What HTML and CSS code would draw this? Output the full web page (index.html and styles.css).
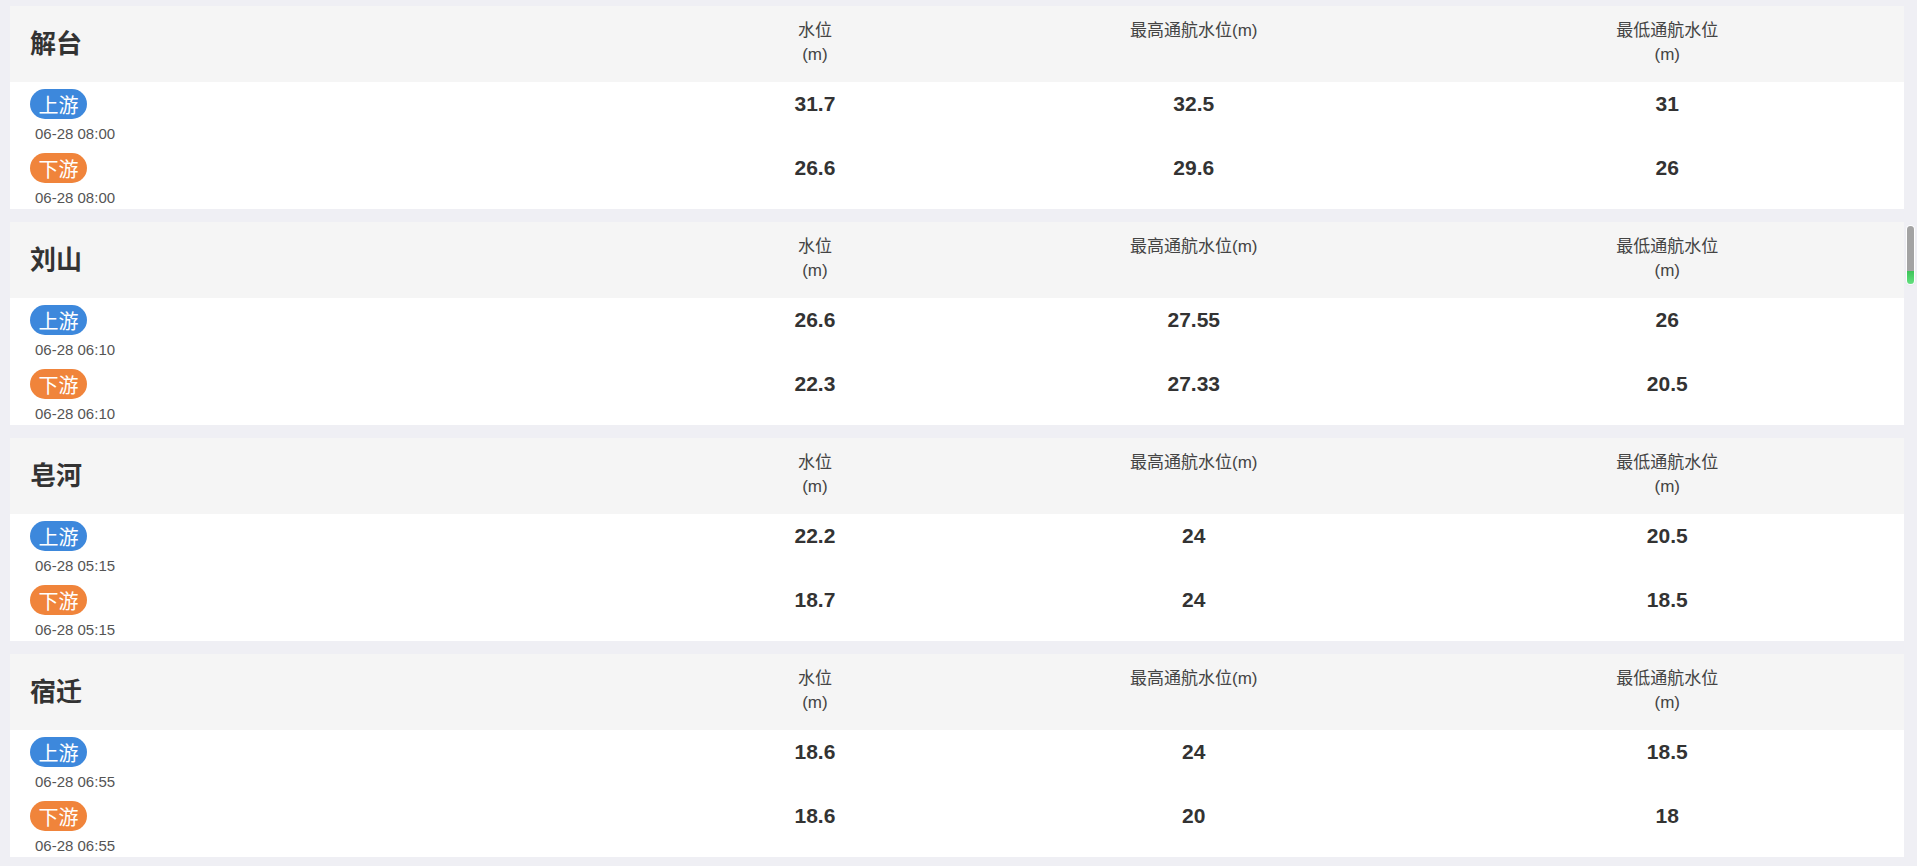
FILE: index.html
```html
<!DOCTYPE html>
<html lang="zh">
<head>
<meta charset="utf-8">
<title>水位</title>
<link rel="stylesheet" href="styles.css">
</head>
<body>
<div class="list">
  <section class="card">
    <div class="head">
      <div class="name">解台</div>
      <div class="label">水位<br>(m)</div>
      <div class="label">最高通航水位(m)</div>
      <div class="label">最低通航水位<br>(m)</div>
    </div>
    <div class="body">
      <div class="row">
        <div class="tag-cell"><span class="tag up">上游</span><div class="time">06-28 08:00</div></div>
        <div class="num">31.7</div><div class="num">32.5</div><div class="num">31</div>
      </div>
      <div class="row">
        <div class="tag-cell"><span class="tag down">下游</span><div class="time">06-28 08:00</div></div>
        <div class="num">26.6</div><div class="num">29.6</div><div class="num">26</div>
      </div>
    </div>
  </section>
  <section class="card">
    <div class="head">
      <div class="name">刘山</div>
      <div class="label">水位<br>(m)</div>
      <div class="label">最高通航水位(m)</div>
      <div class="label">最低通航水位<br>(m)</div>
    </div>
    <div class="body">
      <div class="row">
        <div class="tag-cell"><span class="tag up">上游</span><div class="time">06-28 06:10</div></div>
        <div class="num">26.6</div><div class="num">27.55</div><div class="num">26</div>
      </div>
      <div class="row">
        <div class="tag-cell"><span class="tag down">下游</span><div class="time">06-28 06:10</div></div>
        <div class="num">22.3</div><div class="num">27.33</div><div class="num">20.5</div>
      </div>
    </div>
  </section>
  <section class="card">
    <div class="head">
      <div class="name">皂河</div>
      <div class="label">水位<br>(m)</div>
      <div class="label">最高通航水位(m)</div>
      <div class="label">最低通航水位<br>(m)</div>
    </div>
    <div class="body">
      <div class="row">
        <div class="tag-cell"><span class="tag up">上游</span><div class="time">06-28 05:15</div></div>
        <div class="num">22.2</div><div class="num">24</div><div class="num">20.5</div>
      </div>
      <div class="row">
        <div class="tag-cell"><span class="tag down">下游</span><div class="time">06-28 05:15</div></div>
        <div class="num">18.7</div><div class="num">24</div><div class="num">18.5</div>
      </div>
    </div>
  </section>
  <section class="card">
    <div class="head">
      <div class="name">宿迁</div>
      <div class="label">水位<br>(m)</div>
      <div class="label">最高通航水位(m)</div>
      <div class="label">最低通航水位<br>(m)</div>
    </div>
    <div class="body">
      <div class="row">
        <div class="tag-cell"><span class="tag up">上游</span><div class="time">06-28 06:55</div></div>
        <div class="num">18.6</div><div class="num">24</div><div class="num">18.5</div>
      </div>
      <div class="row">
        <div class="tag-cell"><span class="tag down">下游</span><div class="time">06-28 06:55</div></div>
        <div class="num">18.6</div><div class="num">20</div><div class="num">18</div>
      </div>
    </div>
  </section>
</div>
<div class="scroll-thumb"></div>
</body>
</html>
```
FILE: styles.css
```css
html, body {
  margin: 0;
  padding: 0;
}
body {
  background: #efeff4;
  font-family: "Liberation Sans", Arial, "Noto Sans CJK SC", sans-serif;
  color: #333;
  overflow: hidden;
}
.list {
  display: flex;
  flex-direction: column;
  gap: 13px;
  padding: 6px 13px 0 10px;
}
.card {
  background: #fff;
}
.head {
  display: grid;
  grid-template-columns: 35% 15% 25% 25%;
  align-items: start;
  height: 76px;
  box-sizing: border-box;
  padding-top: 13px;
  background: #f5f5f5;
}
.name {
  align-self: center;
  margin-top: -13px;
  padding-left: 20px;
  font-size: 26px;
  font-weight: bold;
  color: #333;
  line-height: 30px;
}
.label {
  text-align: center;
  font-size: 17px;
  line-height: 24px;
  color: #444;
}
.body {
  display: flex;
  flex-direction: column;
  gap: 11px;
  height: 127px;
  box-sizing: border-box;
  padding: 7px 0 3px;
}
.row {
  display: grid;
  grid-template-columns: 35% 15% 25% 25%;
  align-items: start;
}
.tag-cell {
  padding-left: 20px;
}
.tag {
  display: flex;
  align-items: center;
  justify-content: center;
  width: 57px;
  height: 30px;
  border-radius: 15px;
  color: #fff;
  font-size: 20px;
}
.tag.up {
  background: #3d88dc;
}
.tag.down {
  background: #f0843b;
}
.time {
  margin-top: 6px;
  padding-left: 5px;
  font-size: 15px;
  line-height: 17px;
  color: #555;
}
.num {
  text-align: center;
  font-size: 21px;
  font-weight: bold;
  line-height: 30px;
  color: #333;
}
.scroll-thumb {
  position: fixed;
  top: 226px;
  right: 3px;
  width: 7px;
  height: 58px;
  border-radius: 4px;
  background: linear-gradient(to bottom, #a3a3a3 0, #a3a3a3 78%, #3ec45a 78%, #62e07e 100%);
  box-shadow: 0 0 0 1px rgba(255, 255, 255, 0.9), 0 1px 3px rgba(0, 0, 0, 0.08);
}
```
